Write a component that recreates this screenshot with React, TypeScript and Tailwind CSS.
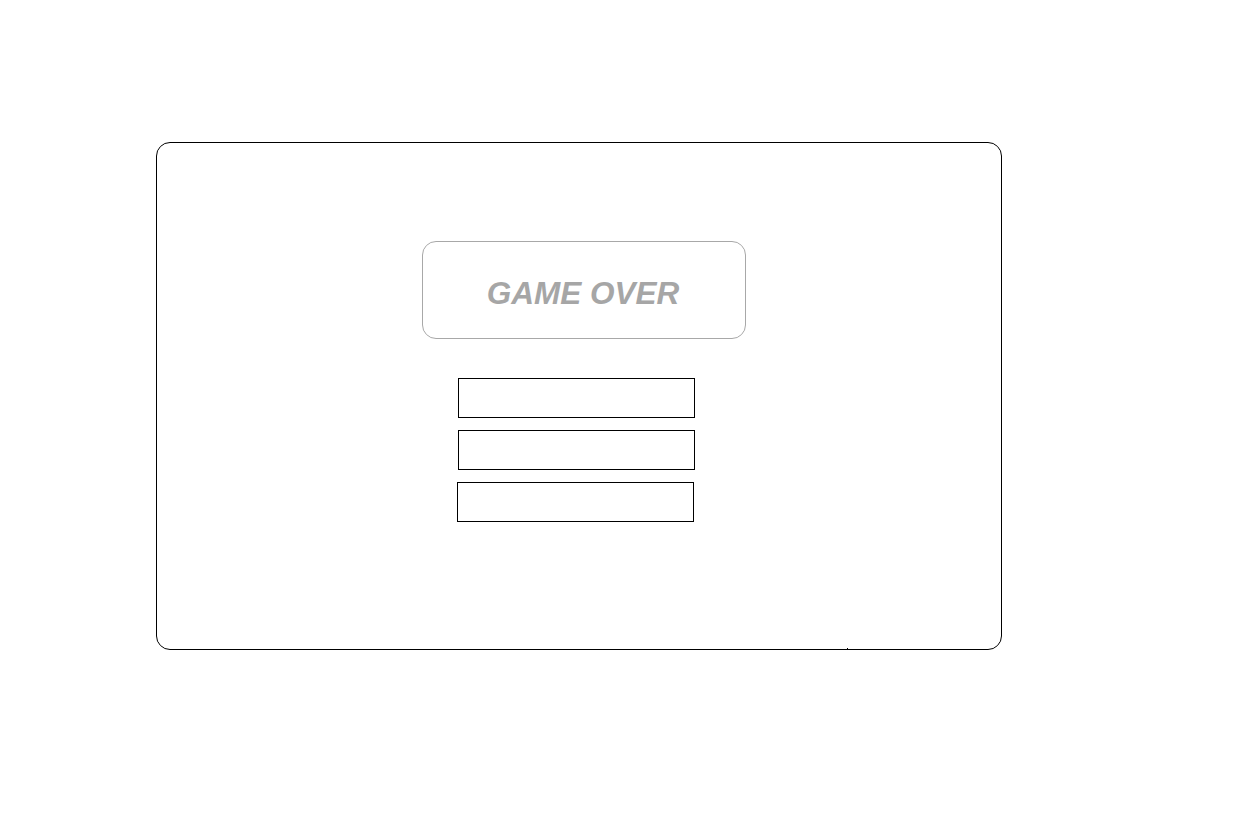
export default function App() {
  return (
    <div className="min-h-[824px] w-[1238px] bg-white pt-[142px] pl-[156px]">
      <div className="relative flex h-[508px] w-[846px] flex-col items-start rounded-[14px] border border-black pl-[265px] pt-[98px]">
        <div className="flex h-[98px] w-[324px] items-center justify-center rounded-[14px] border border-[#a8a8a8] pt-[7px] pr-[2px]">
          <span className="text-[31.5px] font-bold italic leading-none text-[#a6a6a6] [font-family:'Liberation_Sans',Arial,sans-serif]">
            GAME OVER
          </span>
        </div>
        <div className="mt-[39px] flex flex-col gap-[12px]">
          <button className="ml-[36px] h-[40px] w-[237px] border border-black bg-white" />
          <button className="ml-[36px] h-[40px] w-[237px] border border-black bg-white" />
          <button className="ml-[35px] h-[40px] w-[237px] border border-black bg-white" />
        </div>
        <span className="absolute bottom-[0px] left-[690px] h-px w-px bg-black" />
      </div>
    </div>
  );
}
